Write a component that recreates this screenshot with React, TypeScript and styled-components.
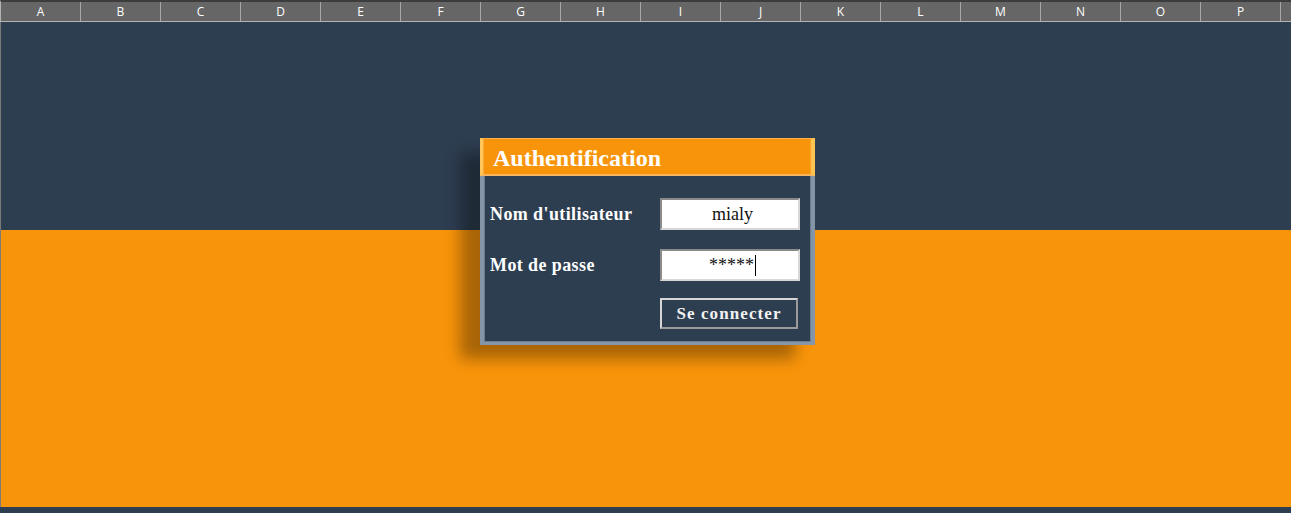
import React from "react";
import styled, { createGlobalStyle } from "styled-components";

const Global = createGlobalStyle`
  html, body { margin: 0; padding: 0; background: #2e3e51; overflow: hidden; }
  * { box-sizing: border-box; }
`;

const NAVY = "#2e3e51";
const ORANGE = "#f8940a";

const Sheet = styled.div`
  position: relative;
  width: 1291px;
  height: 513px;
  display: flex;
  flex-direction: column;
`;

const HeaderRow = styled.div`
  height: 22px;
  display: flex;
  background: #666666;
  border-top: 2px solid #3c3c3c;
  border-bottom: 1px solid #b4b4b4;
  border-left: 1px solid #b4b4b4;
`;

const ColHead = styled.div`
  width: 80px;
  flex: none;
  border-right: 1px solid #a8a8a8;
  color: #ffffff;
  font-family: "Open Sans", "DejaVu Sans", sans-serif;
  font-size: 12px;
  line-height: 19px;
  text-align: center;
`;

const Band = styled.div<{ $color: string; $h: number }>`
  height: ${(p) => p.$h}px;
  background: ${(p) => p.$color};
  border-left: 1px solid #7a7a7a;
  flex: none;
`;

const Dialog = styled.div`
  position: absolute;
  left: 480px;
  top: 138px;
  width: 335px;
  height: 207px;
  display: flex;
  flex-direction: column;
  box-shadow: -20px 14px 14px rgba(0, 0, 0, 0.32);
`;

const TitleBar = styled.div`
  height: 38px;
  flex: none;
  background: ${ORANGE};
  border-top: 1px solid #fbb24a;
  border-left: 3px solid #ffc65a;
  border-right: 4px solid #ffc34f;
  border-bottom: 2px solid #f7b55c;
  box-shadow: inset 1px 0 0 #fba93a, inset -1px 0 0 #fba028;
  padding: 3px 0 0 10px;
  display: flex;
  align-items: center;
  color: #ffffff;
  font-family: "Liberation Serif", "Times New Roman", serif;
  font-weight: bold;
  font-size: 24px;
`;

const Body = styled.div`
  flex: 1;
  background: ${NAVY};
  border-left: 4px solid #8595a8;
  border-right: 4px solid #8595a8;
  border-bottom: 3px solid #8797a9;
  box-shadow: inset 1px 0 0 #6c7c90, inset -1px 0 0 #6c7c90, inset 0 -1px 0 #6c7c90;
  padding: 22px 0 0 6px;
  display: grid;
  grid-template-columns: 170px 140px;
  grid-auto-rows: 32px;
  row-gap: 19px;
  align-items: center;
`;

const Label = styled.div`
  color: #ffffff;
  font-family: "Liberation Serif", "Times New Roman", serif;
  font-weight: bold;
  font-size: 18px;
  letter-spacing: 0.4px;
`;

const Field = styled.div`
  height: 32px;
  background: #ffffff;
  border: 2px solid;
  border-color: #8a8a8a #d8d8d8 #d8d8d8 #8a8a8a;
  display: flex;
  align-items: center;
  justify-content: center;
  padding-left: 5px;
  font-family: "Liberation Serif", "Times New Roman", serif;
  font-size: 18px;
  color: #111111;
`;

const Caret = styled.span`
  display: inline-block;
  width: 1px;
  height: 21px;
  background: #000;
  margin-left: 1px;
`;

const Button = styled.div`
  grid-column: 2;
  align-self: start;
  margin-top: -2px;
  width: 138px;
  height: 31px;
  border: 2px solid;
  border-color: #d6d6d6 #9a9a9a #9a9a9a #d6d6d6;
  display: flex;
  align-items: center;
  justify-content: center;
  color: #f2f2f2;
  font-family: "Liberation Serif", "Times New Roman", serif;
  font-weight: bold;
  font-size: 17px;
  letter-spacing: 1.1px;
`;

const cols = "ABCDEFGHIJKLMNOP".split("");

export default function App() {
  return (
    <>
      <Global />
      <Sheet>
        <HeaderRow>
          {cols.map((c) => (
            <ColHead key={c}>{c}</ColHead>
          ))}
        </HeaderRow>
        <Band $color={NAVY} $h={208} />
        <Band $color={ORANGE} $h={277} />
        <Dialog>
          <TitleBar>Authentification</TitleBar>
          <Body>
            <Label>Nom d'utilisateur</Label>
            <Field>mialy</Field>
            <Label>Mot de passe</Label>
            <Field>
              *****
              <Caret />
            </Field>
            <Button>Se connecter</Button>
          </Body>
        </Dialog>
      </Sheet>
    </>
  );
}
